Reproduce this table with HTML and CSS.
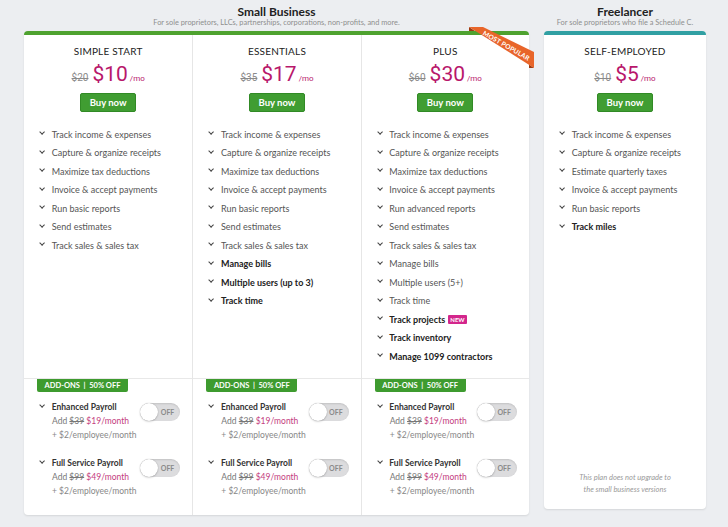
FILE: index.html
```html
<!DOCTYPE html>
<html lang="en">
<head>
<meta charset="utf-8">
<title>Pricing</title>
<link rel="stylesheet" href="styles.css">
</head>
<body>
<div class="page">
  <section class="group group-sb">
    <header class="group-head">
      <h2 class="group-title">Small Business</h2>
      <p class="group-sub">For sole proprietors, LLCs, partnerships, corporations, non-profits, and more.</p>
    </header>
    <div class="card card-sb">
      <div class="plan">
        <div class="plan-name">SIMPLE START</div>
        <div class="price"><span class="old">$20</span><span class="now">$10</span><span class="per">/mo</span></div>
        <div class="buy">Buy now</div>
        <ul class="features">
          <li>Track income &amp; expenses</li>
          <li>Capture &amp; organize receipts</li>
          <li>Maximize tax deductions</li>
          <li>Invoice &amp; accept payments</li>
          <li>Run basic reports</li>
          <li>Send estimates</li>
          <li>Track sales &amp; sales tax</li>
        </ul>
        <div class="addons">
          <div class="addons-tag">ADD-ONS &nbsp;|&nbsp; 50% OFF</div>
          <div class="addon">
            <div class="addon-body">
              <div class="addon-name">Enhanced Payroll</div>
              <div class="addon-price">Add <s>$39</s> <span class="pink">$19/month</span></div>
              <div class="addon-extra">+ $2/employee/month</div>
            </div>
            <div class="toggle"><span class="knob"></span><span class="off">OFF</span></div>
          </div>
          <div class="addon">
            <div class="addon-body">
              <div class="addon-name">Full Service Payroll</div>
              <div class="addon-price">Add <s>$99</s> <span class="pink">$49/month</span></div>
              <div class="addon-extra">+ $2/employee/month</div>
            </div>
            <div class="toggle"><span class="knob"></span><span class="off">OFF</span></div>
          </div>
        </div>
      </div>
      <div class="plan">
        <div class="plan-name">ESSENTIALS</div>
        <div class="price"><span class="old">$35</span><span class="now">$17</span><span class="per">/mo</span></div>
        <div class="buy">Buy now</div>
        <ul class="features">
          <li>Track income &amp; expenses</li>
          <li>Capture &amp; organize receipts</li>
          <li>Maximize tax deductions</li>
          <li>Invoice &amp; accept payments</li>
          <li>Run basic reports</li>
          <li>Send estimates</li>
          <li>Track sales &amp; sales tax</li>
          <li class="b">Manage bills</li>
          <li class="b">Multiple users (up to 3)</li>
          <li class="b">Track time</li>
        </ul>
        <div class="addons">
          <div class="addons-tag">ADD-ONS &nbsp;|&nbsp; 50% OFF</div>
          <div class="addon">
            <div class="addon-body">
              <div class="addon-name">Enhanced Payroll</div>
              <div class="addon-price">Add <s>$39</s> <span class="pink">$19/month</span></div>
              <div class="addon-extra">+ $2/employee/month</div>
            </div>
            <div class="toggle"><span class="knob"></span><span class="off">OFF</span></div>
          </div>
          <div class="addon">
            <div class="addon-body">
              <div class="addon-name">Full Service Payroll</div>
              <div class="addon-price">Add <s>$99</s> <span class="pink">$49/month</span></div>
              <div class="addon-extra">+ $2/employee/month</div>
            </div>
            <div class="toggle"><span class="knob"></span><span class="off">OFF</span></div>
          </div>
        </div>
      </div>
      <div class="plan plan-plus">
        <svg class="ribbon" width="72" height="48" viewBox="0 0 72 48">
          <polygon points="4,3 4,7 10,7" fill="#9c3a10"/>
          <polygon points="64,40.5 69,44 64,44" fill="#9c3a10"/>
          <polygon points="4,3 18,3 69,28 69,44" fill="#e8652a"/>
          <text class="ribbon-text" transform="translate(41.5 21.5) rotate(30)" text-anchor="middle" dominant-baseline="central">MOST POPULAR</text>
        </svg>
        <div class="plan-name">PLUS</div>
        <div class="price"><span class="old">$60</span><span class="now">$30</span><span class="per">/mo</span></div>
        <div class="buy">Buy now</div>
        <ul class="features">
          <li>Track income &amp; expenses</li>
          <li>Capture &amp; organize receipts</li>
          <li>Maximize tax deductions</li>
          <li>Invoice &amp; accept payments</li>
          <li>Run advanced reports</li>
          <li>Send estimates</li>
          <li>Track sales &amp; sales tax</li>
          <li>Manage bills</li>
          <li>Multiple users (5+)</li>
          <li>Track time</li>
          <li class="b">Track projects <span class="new">NEW</span></li>
          <li class="b">Track inventory</li>
          <li class="b">Manage 1099 contractors</li>
        </ul>
        <div class="addons">
          <div class="addons-tag">ADD-ONS &nbsp;|&nbsp; 50% OFF</div>
          <div class="addon">
            <div class="addon-body">
              <div class="addon-name">Enhanced Payroll</div>
              <div class="addon-price">Add <s>$39</s> <span class="pink">$19/month</span></div>
              <div class="addon-extra">+ $2/employee/month</div>
            </div>
            <div class="toggle"><span class="knob"></span><span class="off">OFF</span></div>
          </div>
          <div class="addon">
            <div class="addon-body">
              <div class="addon-name">Full Service Payroll</div>
              <div class="addon-price">Add <s>$99</s> <span class="pink">$49/month</span></div>
              <div class="addon-extra">+ $2/employee/month</div>
            </div>
            <div class="toggle"><span class="knob"></span><span class="off">OFF</span></div>
          </div>
        </div>
      </div>
    </div>
  </section>
  <section class="group group-fl">
    <header class="group-head">
      <h2 class="group-title">Freelancer</h2>
      <p class="group-sub">For sole proprietors who file a Schedule C.</p>
    </header>
    <div class="card card-fl">
      <div class="plan">
        <div class="plan-name">SELF-EMPLOYED</div>
        <div class="price"><span class="old">$10</span><span class="now">$5</span><span class="per">/mo</span></div>
        <div class="buy">Buy now</div>
        <ul class="features">
          <li>Track income &amp; expenses</li>
          <li>Capture &amp; organize receipts</li>
          <li>Estimate quarterly taxes</li>
          <li>Invoice &amp; accept payments</li>
          <li>Run basic reports</li>
          <li class="b">Track miles</li>
        </ul>
        <p class="note">This plan does not upgrade to<br>the small business versions</p>
      </div>
    </div>
  </section>
</div>
</body>
</html>
```
FILE: styles.css
```css
html, body {
  margin: 0;
  padding: 0;
}

body {
  background: #eceef1;
  font-family: Lato, "Open Sans", "DejaVu Sans", sans-serif;
  color: #333;
}

.page {
  display: flex;
  align-items: stretch;
  gap: 15px;
  padding-left: 24px;
  height: 527px;
  box-sizing: border-box;
}

.group {
  display: flex;
  flex-direction: column;
}

.group-sb {
  width: 505px;
  padding-bottom: 12px;
}

.group-fl {
  width: 162px;
  padding-bottom: 18px;
}

.group-head {
  flex: none;
  height: 31px;
  text-align: center;
}

.group-title {
  margin: 0;
  padding-top: 5px;
  font-size: 12px;
  line-height: 13px;
  font-weight: 700;
  color: #222;
}

.group-sub {
  margin: 0;
  font-size: 7.4px;
  line-height: 9px;
  color: #8e8e8e;
  white-space: nowrap;
}

.card {
  flex: 1;
  min-height: 0;
  background: #fff;
  border-top: 4px solid #4ea22f;
  border-radius: 4px;
  box-shadow: 0 1px 2px rgba(0, 0, 0, 0.1);
}

.card-sb {
  display: grid;
  grid-template-columns: repeat(3, 1fr);
}

.card-fl {
  display: flex;
  flex-direction: column;
  border-top-color: #31a0a3;
}

.plan {
  position: relative;
  display: flex;
  flex-direction: column;
  flex: 1;
  min-width: 0;
}

.plan + .plan {
  border-left: 1px solid #e6e6e6;
}

.plan-name {
  margin-top: 9px;
  text-align: center;
  font-size: 10px;
  line-height: 14px;
  letter-spacing: 0.2px;
  color: #222;
}

.price {
  margin-top: 4px;
  height: 24px;
  display: flex;
  justify-content: center;
  align-items: baseline;
  font-family: Roboto, Lato, sans-serif;
}

.old {
  font-size: 10px;
  color: #8a8a8a;
  text-decoration: line-through;
  margin-right: 4px;
}

.now {
  font-size: 21px;
  line-height: 24px;
  color: #b8176b;
}

.per {
  font-size: 8px;
  color: #b8176b;
  margin-left: 2px;
}

.buy {
  align-self: center;
  margin-top: 7px;
  width: 56px;
  height: 19px;
  box-sizing: border-box;
  background: #409d32;
  border: 1px solid #318a25;
  border-radius: 2px;
  color: #fff;
  font-weight: 700;
  font-size: 9.5px;
  display: flex;
  align-items: center;
  justify-content: center;
}

.features {
  list-style: none;
  margin: 12.75px 0 0;
  padding: 0 0 0 15px;
  flex: 1;
}

.features li,
.addon-name {
  display: flex;
  align-items: center;
  white-space: nowrap;
}

.features li {
  height: 18.5px;
  font-size: 9px;
  color: #555;
}

.features li::before,
.addon-name::before {
  content: "";
  flex: none;
  width: 3.2px;
  height: 3.2px;
  border-right: 1.2px solid #444;
  border-bottom: 1.2px solid #444;
  transform: rotate(45deg);
  margin: -3px 7.5px 0 1px;
}

.features li.b {
  font-weight: 700;
  color: #222;
}

.new {
  margin-left: 3px;
  background: #d3268c;
  color: #fff;
  font-size: 6px;
  font-weight: 700;
  line-height: 9px;
  padding: 0 2px;
  border-radius: 1px;
}

.addons {
  flex: none;
  border-top: 1px solid #e8e8e8;
  padding: 0 12px 17px 0;
}

.addons-tag {
  margin-left: 13px;
  width: 91px;
  height: 13px;
  background: #3e9b2f;
  color: #fff;
  font-size: 7.5px;
  font-weight: 700;
  display: flex;
  align-items: center;
  justify-content: center;
  border-radius: 0 0 2px 2px;
  white-space: nowrap;
}

.addon {
  display: flex;
  align-items: flex-start;
  margin-top: 8px;
  padding-left: 15px;
}

.addon + .addon {
  margin-top: 14px;
}

.addon-body {
  flex: 1;
  min-width: 0;
  font-size: 8.5px;
  line-height: 14px;
  white-space: nowrap;
}

.addon-name {
  font-weight: 700;
  color: #333;
}

.addon-price {
  padding-left: 13px;
  color: #777;
}

.addon-price s {
  color: #777;
}

.pink {
  color: #c43d80;
}

.addon-extra {
  padding-left: 13px;
  color: #888;
}

.toggle {
  flex: none;
  margin-top: 3px;
  width: 40px;
  height: 18px;
  box-sizing: border-box;
  border-radius: 9px;
  background: #dcdcde;
  box-shadow: inset 0 1px 2px rgba(0, 0, 0, 0.12);
  display: flex;
  align-items: center;
  justify-content: space-between;
  padding-right: 6px;
}

.knob {
  width: 18px;
  height: 18px;
  border-radius: 50%;
  background: #fff;
  box-shadow: 0 0 1px rgba(0, 0, 0, 0.3), 0 1px 2px rgba(0, 0, 0, 0.15);
}

.off {
  font-size: 7px;
  font-weight: 700;
  color: #8a8a8a;
}

.ribbon {
  position: absolute;
  left: 103px;
  top: -11px;
  overflow: visible;
}

.ribbon-text {
  font-family: Lato, "Open Sans", sans-serif;
  font-size: 6.5px;
  font-weight: 700;
  fill: #fff;
  letter-spacing: 0.2px;
}

.note {
  margin: 0;
  padding-bottom: 13px;
  text-align: center;
  font-style: italic;
  font-size: 7.5px;
  line-height: 12px;
  color: #9a9a9a;
}
```
